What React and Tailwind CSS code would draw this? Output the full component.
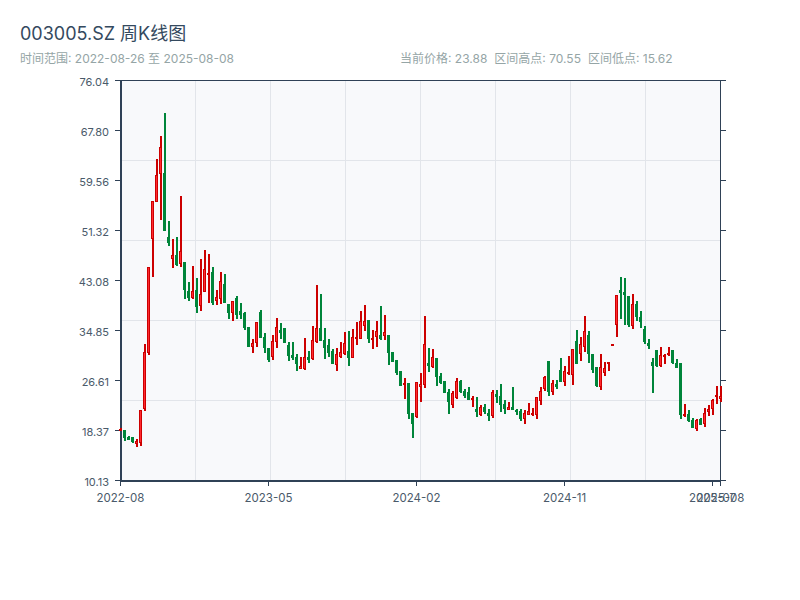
const candles = [
  ['r', 428, 429, 431, 431], ['g', 430, 430, 438, 441], ['g', 436, 437, 440, 440], ['g', 437, 437, 442, 443],
  ['r', 439, 441, 444, 447], ['r', 410, 410, 443, 446], ['r', 344, 352, 409, 411], ['r', 267, 267, 353, 355],
  ['r', 201, 201, 239, 277], ['r', 159, 175, 202, 202], ['r', 136, 147, 174, 220], ['g', 113, 173, 231, 231],
  ['g', 221, 237, 243, 246], ['r', 239, 255, 259, 268], ['g', 237, 255, 265, 266], ['r', 196, 251, 264, 267],
  ['g', 262, 262, 290, 299], ['g', 282, 291, 298, 301], ['r', 266, 291, 298, 299], ['g', 278, 290, 307, 313],
  ['r', 259, 294, 306, 311], ['r', 250, 269, 292, 292], ['r', 254, 273, 274, 303], ['g', 267, 272, 303, 305],
  ['r', 290, 297, 301, 305], ['r', 272, 281, 299, 304], ['g', 274, 284, 303, 303], ['g', 304, 304, 313, 319],
  ['r', 301, 301, 313, 321], ['g', 296, 298, 315, 319], ['g', 303, 311, 315, 319], ['g', 312, 313, 328, 330],
  ['g', 327, 327, 347, 347], ['r', 339, 343, 347, 353], ['r', 322, 322, 343, 347], ['g', 310, 312, 338, 338],
  ['g', 333, 337, 348, 353], ['g', 348, 348, 360, 362],
  ['r', 335, 341, 357, 360], ['r', 318, 327, 342, 348], ['g', 323, 330, 333, 339], ['g', 328, 328, 343, 343],
  ['g', 342, 345, 356, 361], ['g', 342, 355, 358, 360], ['g', 354, 357, 364, 371], ['r', 357, 366, 369, 369],
  ['r', 338, 357, 369, 370], ['g', 351, 357, 360, 363], ['r', 326, 340, 359, 360], ['r', 285, 328, 342, 343],
  ['g', 294, 328, 341, 341], ['g', 328, 340, 348, 359], ['g', 339, 345, 353, 357], ['g', 349, 351, 364, 364],
  ['r', 348, 354, 365, 371], ['r', 342, 352, 357, 358], ['r', 332, 343, 354, 355], ['g', 331, 351, 358, 366],
  ['r', 329, 337, 358, 358], ['r', 322, 337, 339, 345], ['r', 311, 321, 339, 339], ['r', 305, 321, 326, 331],
  ['g', 320, 320, 339, 343], ['r', 330, 338, 340, 349], ['r', 321, 331, 337, 347], ['g', 306, 335, 339, 340],
  ['r', 315, 332, 336, 340], ['g', 335, 335, 353, 365], ['g', 352, 352, 362, 362], ['g', 360, 360, 373, 375],
  ['g', 371, 371, 386, 386], ['r', 378, 383, 385, 399], ['g', 383, 383, 414, 419], ['g', 413, 413, 424, 438],
  ['r', 382, 382, 417, 418], ['r', 373, 384, 387, 402], ['r', 316, 344, 385, 388], ['g', 348, 363, 366, 372],
  ['r', 349, 357, 367, 368], ['g', 358, 358, 377, 386], ['g', 373, 376, 383, 384], ['g', 381, 381, 393, 393],
  ['g', 389, 392, 402, 414], ['r', 391, 393, 405, 408], ['r', 378, 381, 398, 399], ['g', 380, 381, 392, 393],
  ['g', 389, 391, 396, 398], ['g', 387, 392, 400, 400], ['r', 396, 398, 400, 407], ['g', 397, 409, 412, 417],
  ['r', 405, 407, 415, 416], ['g', 404, 407, 412, 414], ['g', 409, 413, 416, 421], ['r', 390, 392, 416, 418],
  ['g', 390, 394, 397, 403], ['g', 384, 396, 405, 412], ['g', 400, 404, 409, 414], ['r', 402, 407, 410, 410],
  ['g', 387, 407, 410, 410], ['g', 409, 410, 412, 415], ['g', 409, 411, 419, 421], ['r', 410, 413, 419, 424],
  ['r', 403, 411, 415, 415], ['r', 408, 413, 415, 416], ['r', 397, 397, 415, 419], ['r', 387, 391, 401, 405],
  ['r', 376, 377, 389, 391], ['g', 361, 361, 392, 396], ['r', 380, 383, 392, 395], ['g', 380, 384, 387, 389],
  ['g', 358, 370, 382, 382], ['r', 366, 371, 382, 386], ['r', 356, 372, 374, 375], ['r', 349, 349, 375, 385],
  ['g', 330, 341, 364, 364], ['r', 337, 344, 354, 361], ['r', 316, 331, 347, 352], ['g', 331, 335, 354, 363],
  ['g', 354, 354, 370, 373], ['g', 367, 367, 386, 387], ['r', 354, 367, 387, 390], ['r', 362, 368, 373, 376],
  ['r', 362, 362, 364, 371], ['r', 344, 344, 346, 346], ['r', 295, 295, 325, 337], ['g', 277, 290, 293, 319],
  ['g', 278, 292, 295, 325], ['g', 296, 296, 325, 327], ['r', 294, 304, 326, 329], ['g', 301, 304, 317, 321],
  ['g', 311, 317, 322, 328], ['g', 326, 329, 342, 344], ['g', 339, 343, 346, 349], ['g', 358, 362, 366, 393],
  ['g', 350, 350, 366, 367], ['r', 347, 355, 366, 367], ['r', 354, 355, 357, 364], ['r', 347, 353, 355, 356],
  ['g', 350, 350, 363, 364], ['g', 359, 363, 368, 368], ['g', 363, 363, 415, 419], ['r', 404, 414, 416, 417],
  ['g', 410, 414, 421, 422], ['g', 418, 420, 428, 428], ['r', 419, 420, 429, 431], ['g', 418, 419, 425, 425],
  ['r', 408, 413, 424, 427], ['r', 405, 409, 412, 416], ['r', 399, 400, 409, 415], ['r', 386, 395, 397, 404],
  ['r', 386, 396, 399, 402],
];

const yLabels = ['76.04', '67.80', '59.56', '51.32', '43.08', '34.85', '26.61', '18.37', '10.13'];
const xLabels = [
  [120.5, '2022-08'],
  [268.5, '2023-05'],
  [416.5, '2024-02'],
  [564.5, '2024-11'],
  [712.5, '2025-07'],
  [720.5, '2025-08'],
];
const vGrid = [195.5, 270.5, 345.5, 420.5, 495.5, 570.5, 645.5];
const hGrid = [160.5, 240.5, 320.5, 400.5];

function Candle({ candle, x }) {
  const [dir, high, top, bottom, low] = candle;
  const isUp = dir === 'r';
  const dark = isUp ? '#cc0000' : '#00853a';
  const height = Math.max(bottom - top, 2);
  return (
    <g shapeRendering="crispEdges">
      <rect x={x - 0.5} y={high} width="2" height={low - high} fill={dark} />
      <rect x={x - 1.5} y={top} width="3" height={height} fill={dark} />
      {isUp && height > 2 && <rect x={x - 0.5} y={top + 1} width="1" height={height - 2} fill="#ff2a30" />}
    </g>
  );
}

function KLineChart() {
  return (
    <svg width="800" height="533" viewBox="0 67 800 533" className="block">
      <rect x="120.5" y="80.5" width="600" height="400" fill="#f8f9fb" />
      <g stroke="#e2e5ea" strokeWidth="1">
        {vGrid.map((x) => <line key={x} x1={x} x2={x} y1="80.5" y2="480.5" />)}
        {hGrid.map((y) => <line key={y} x1="120.5" x2="720.5" y1={y} y2={y} />)}
      </g>

      <g stroke="#2f4156">
        <line x1="115" x2="726" y1="80.5" y2="80.5" strokeWidth="1" />
        <line x1="121" x2="121" y1="80" y2="482" strokeWidth="2" />
        <line x1="720.5" x2="720.5" y1="80" y2="486" strokeWidth="1" />
        <line x1="120" x2="721" y1="481" y2="481" strokeWidth="2" />
        {yLabels.map((_, i) => {
          const y = 80.5 + i * 50;
          return (
            <g key={i} strokeWidth="1">
              <line x1="115" x2="120" y1={y} y2={y} />
              <line x1="721" x2="726" y1={y} y2={y} />
            </g>
          );
        })}
        {xLabels.map(([x]) => <line key={x} x1={x} x2={x} y1="481" y2="486" strokeWidth="1" />)}
      </g>

      {candles.map((candle, i) => <Candle key={i} candle={candle} x={120.5 + i * 4} />)}

      <g fill="#4a5a6a" fontFamily="Inter, 'Noto Sans CJK SC', sans-serif">
        {yLabels.map((label, i) => (
          <text key={label} x="109" y={86 + i * 50} textAnchor="end" fontSize="11">{label}</text>
        ))}
        {xLabels.map(([x, label]) => (
          <text key={label} x={x} y="502" textAnchor="middle" fontSize="11.5">{label}</text>
        ))}
      </g>
    </svg>
  );
}

export default function App() {
  return (
    <div className="h-[600px] w-[800px] overflow-hidden bg-white font-['Inter','Noto_Sans_CJK_SC',sans-serif]">
      <div className="px-5 pt-[22px]">
        <h1 className="text-lg leading-[24px] font-normal text-[#34495e]">003005.SZ 周K线图</h1>
        <div className="mt-[5px] flex text-xs leading-[16px] text-[#95a5a6]">
          <span className="w-[380px]">时间范围: 2022-08-26 至 2025-08-08</span>
          <div className="flex gap-[7px]">
            <span>当前价格: 23.88</span>
            <span>区间高点: 70.55</span>
            <span>区间低点: 15.62</span>
          </div>
        </div>
      </div>
      <KLineChart />
    </div>
  );
}
